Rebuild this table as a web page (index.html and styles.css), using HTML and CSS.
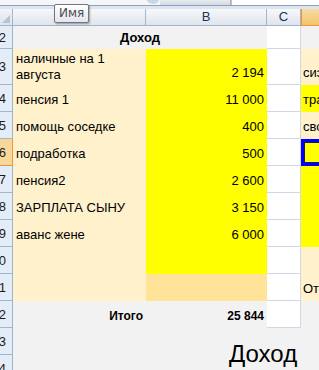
FILE: index.html
```html
<!DOCTYPE html>
<html lang="ru">
<head>
<meta charset="utf-8">
<title>Доход</title>
<link rel="stylesheet" href="styles.css">
</head>
<body>
<div class="app">
  <div class="fbar">
    <div class="fbar-left"><span class="fbar-orb"></span></div>
    <div class="fbar-btn"></div>
    <div class="fbar-input"></div>
  </div>
  <div class="fbar-gap"></div>

  <div class="sheet">
    <!-- column headers -->
    <div class="corner"><span class="corner-tri"></span></div>
    <div class="colhdr">A</div>
    <div class="colhdr">B</div>
    <div class="colhdr">C</div>
    <div class="colhdr colhdr-sel">D</div>

    <!-- row 2 -->
    <div class="rowhdr"><span>2</span></div>
    <div class="cell grey title span2">Доход</div>
    <div class="cell gc"></div>
    <div class="cell grey"></div>

    <!-- row 3 -->
    <div class="rowhdr"><span>3</span></div>
    <div class="cell beige wrap">наличные на 1<br>августа</div>
    <div class="cell yellow num">2 194</div>
    <div class="cell gc"></div>
    <div class="cell beige dtext">сиэ</div>

    <!-- row 4 -->
    <div class="rowhdr"><span>4</span></div>
    <div class="cell beige">пенсия 1</div>
    <div class="cell yellow num">11 000</div>
    <div class="cell gc"></div>
    <div class="cell yellow dtext">тра</div>

    <!-- row 5 -->
    <div class="rowhdr"><span>5</span></div>
    <div class="cell beige">помощь соседке</div>
    <div class="cell yellow num">400</div>
    <div class="cell gc"></div>
    <div class="cell beige dtext">сво</div>

    <!-- row 6 -->
    <div class="rowhdr rowhdr-sel"><span>6</span></div>
    <div class="cell beige">подработка</div>
    <div class="cell yellow num">500</div>
    <div class="cell gc"></div>
    <div class="cell yellow active"></div>

    <!-- row 7 -->
    <div class="rowhdr"><span>7</span></div>
    <div class="cell beige">пенсия2</div>
    <div class="cell yellow num">2 600</div>
    <div class="cell gc"></div>
    <div class="cell yellow"></div>

    <!-- row 8 -->
    <div class="rowhdr"><span>8</span></div>
    <div class="cell beige">ЗАРПЛАТА СЫНУ</div>
    <div class="cell yellow num">3 150</div>
    <div class="cell gc"></div>
    <div class="cell yellow"></div>

    <!-- row 9 -->
    <div class="rowhdr"><span>9</span></div>
    <div class="cell beige">аванс жене</div>
    <div class="cell yellow num">6 000</div>
    <div class="cell gc"></div>
    <div class="cell yellow"></div>

    <!-- row 10 -->
    <div class="rowhdr"><span>10</span></div>
    <div class="cell beige"></div>
    <div class="cell yellow"></div>
    <div class="cell gc"></div>
    <div class="cell beige"></div>

    <!-- row 11 -->
    <div class="rowhdr"><span>11</span></div>
    <div class="cell beige"></div>
    <div class="cell gold"></div>
    <div class="cell gc"></div>
    <div class="cell beige dtext">Отч</div>

    <!-- row 12 -->
    <div class="rowhdr"><span>12</span></div>
    <div class="cell grey bold right">Итого</div>
    <div class="cell grey bold num">25 844</div>
    <div class="cell gc"></div>
    <div class="cell grey"></div>

    <!-- row 13 -->
    <div class="rowhdr"><span>13</span></div>
    <div class="cell grey"></div>
    <div class="cell grey"></div>
    <div class="cell grey"></div>
    <div class="cell grey"></div>

    <!-- row 14 -->
    <div class="rowhdr"><span>14</span></div>
    <div class="cell grey"></div>
    <div class="cell grey"></div>
    <div class="cell grey"></div>
    <div class="cell grey"></div>
  </div>

  <!-- embedded chart floating over the sheet -->
  <div class="chart"><span class="chart-title">Доход</span></div>

  <!-- name box tooltip -->
  <div class="tip">Имя</div>
</div>
</body>
</html>
```

FILE: styles.css
```css
* { box-sizing: border-box; }

html, body {
  margin: 0;
  padding: 0;
  background: #f2f2f2;
}

body {
  width: 319px;
  height: 370px;
  overflow: hidden;
  font-family: "Liberation Sans", Arial, sans-serif;
  font-size: 13px;
  color: #000;
}

.app {
  position: relative;
  width: 319px;
  height: 370px;
  overflow: hidden;
}

/* formula bar strip */
.fbar {
  display: flex;
  height: 6px;
  background: #eef1f5;
  border-bottom: 1px solid #8da2bd;
}
.fbar-left {
  width: 160px;
  position: relative;
  background: #f4f6f9;
}
.fbar-orb {
  position: absolute;
  right: 0;
  top: -6px;
  width: 14px;
  height: 10px;
  border-radius: 0 0 7px 7px;
  background: #c8d6e8;
}
.fbar-btn {
  width: 71px;
  background: linear-gradient(#e9ecf0, #d4d9e0);
  border-right: 1px solid #a7b2c1;
}
.fbar-input {
  flex: 1;
  background: #fff;
  border-left: 1px solid #b9c3d0;
}
.fbar-gap {
  height: 3px;
  background: #dfe5ee;
}

/* worksheet grid */
.sheet {
  display: grid;
  grid-template-columns: 13px 133px 121px 34px 90px;
  grid-template-rows: 17px 23px 36px repeat(12, 27px);
}

.corner {
  position: relative;
  background: linear-gradient(#f1f4f8, #dde4ec);
  border-right: 1px solid #9eb6ce;
  border-bottom: 1px solid #9eb6ce;
}
.corner-tri {
  position: absolute;
  right: 2px;
  bottom: 2px;
  width: 0;
  height: 0;
  border-left: 8px solid transparent;
  border-bottom: 8px solid #b8c3cf;
}

.colhdr {
  background: linear-gradient(#f6f8fb, #dfe5ec);
  border-right: 1px solid #9eb6ce;
  border-bottom: 1px solid #9eb6ce;
  color: #1e3556;
  font-family: "Liberation Sans", Arial, sans-serif;
  font-size: 13px;
  line-height: 16px;
  text-align: center;
}
.colhdr-sel {
  background: linear-gradient(#f9dba2, #f2c46b);
  border-right-color: #f29536;
  border-left: 1px solid #f29536;
  border-bottom-color: #f29536;
}

.rowhdr {
  display: flex;
  justify-content: flex-end;
  align-items: center;
  padding-right: 6px;
  overflow: hidden;
  white-space: nowrap;
  background: #e4ecf7;
  border-right: 1px solid #9eb6ce;
  border-bottom: 1px solid #9eb6ce;
  color: #1b1b1b;
  font-size: 13px;
}
.rowhdr span { flex: none; }
.rowhdr-sel {
  background: #f8d79a;
  border-right-color: #f29536;
  border-bottom-color: #f29536;
}

/* cells */
.cell {
  display: flex;
  align-items: flex-end;
  padding: 0 0 4px 3px;
  line-height: 16px;
  white-space: nowrap;
  overflow: hidden;
}
.span2 { grid-column: span 2; }
.grey { background: #f2f2f2; }
.beige { background: #fff1cc; }
.yellow { background: #ffff00; }
.gold { background: #fee398; }
.gc {
  background: #fff;
  border-right: 1px solid #d0d7e5;
  border-bottom: 1px solid #d0d7e5;
}
.title {
  justify-content: center;
  font-weight: bold;
  padding: 0 0 3px 0;
}
.wrap {
  padding-bottom: 2px;
  line-height: 16px;
}
.num {
  justify-content: flex-end;
  padding-right: 3px;
}
.right {
  justify-content: flex-end;
  padding-right: 3px;
}
.bold {
  font-weight: bold;
  font-size: 12px;
}
.dtext {
  padding-left: 2px;
}
.active {
  border: 3px solid #0000ff;
  box-shadow: inset 0 0 0 1px #1a1a60;
  border-right: none;
}

/* floating chart */
.chart {
  position: absolute;
  left: 13px;
  top: 329px;
  width: 306px;
  height: 41px;
  background: #f2f2f2;
}
.chart-title {
  position: absolute;
  left: 216px;
  top: 11px;
  font-size: 24px;
  line-height: 28px;
  color: #000;
}

/* name box tooltip */
.tip {
  position: absolute;
  left: 54px;
  top: 4px;
  height: 19px;
  padding: 0 4px;
  border: 1px solid #767676;
  border-radius: 2px;
  background: linear-gradient(#ffffff, #e4e5f0);
  box-shadow: 1px 1px 2px rgba(0, 0, 0, 0.35);
  color: #4c4c4c;
  font-family: "DejaVu Sans", sans-serif;
  font-size: 12px;
  line-height: 17px;
}
```
